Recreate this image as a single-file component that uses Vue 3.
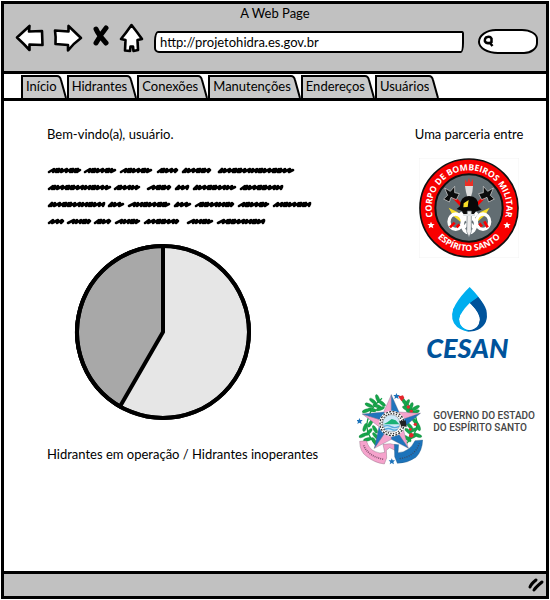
<script setup>
import { ref } from 'vue'

const address = ref('http://projetohidra.es.gov.br')
const query = ref('')
const tabs = ['Início', 'Hidrantes', 'Conexões', 'Manutenções', 'Endereços', 'Usuários']

// Placeholder copy: start and end of every scribbled word, line by line
const lines = [
  [[2, 33], [38, 68], [74, 104], [111, 130], [136, 163], [172, 246]],
  [[2, 63], [68, 92], [101, 123], [129, 141], [147, 188], [194, 235]],
  [[2, 57], [62, 76], [82, 122], [128, 143], [149, 186], [192, 221], [227, 263]],
  [[2, 16], [21, 43], [48, 63], [69, 92], [98, 131], [141, 165], [171, 217]]
]

const rises = [5, 3, 4, 3, 2, 3, 5, 4, 2, 3, 2, 4]
function scribble([from, to], row) {
  const base = 9 + row * 17
  let x = from
  let i = from + row
  let d = `M${x} ${base}`
  while (x < to - 4) {
    const step = rises[i % rises.length]
    const next = Math.min(x + step + 1, to)
    d += ` L${next} ${base - 3} L${next - 1} ${base}`
    x = next - 1
    i += 1
  }
  return d + ` L${to} ${base - 2}`
}
const scribbles = lines.flatMap((words, row) => words.map((w) => scribble(w, row)))

const operating = 7 / 12
const angle = operating * Math.PI * 2
const px = 89 + 86 * Math.sin(angle)
const py = 89 - 86 * Math.cos(angle)
const inactiveSlice = `M89 89 L${px} ${py} A86 86 0 0 1 89 3 Z`

// Leaves of the wreath: centre x, centre y, rotation
const leaves = [
  [92, 44, 70], [105, 58, 40], [78, 52, 40], [90, 66, 20], [66, 64, 25], [100, 74, -20],
  [76, 78, 10], [58, 80, -20], [70, 118, -60], [54, 130, -70], [84, 136, 60], [66, 144, -50],
  [48, 154, -25], [86, 156, 50], [62, 166, -15], [82, 172, 60],
  [180, 58, -60], [192, 68, -70], [206, 72, -30], [178, 74, 30], [205, 84, -20], [190, 84, 20],
  [204, 112, 50], [188, 126, 50], [214, 128, 70], [200, 138, -20], [184, 142, 40], [212, 154, 20],
  [196, 158, -20], [182, 164, 40], [172, 54, 60]
]
</script>

<template>
  <div class="window">
    <header class="chrome">
      <div class="title">A Web Page</div>
      <div class="toolbar">
        <nav class="buttons" aria-label="Navegação">
          <button type="button" aria-label="Voltar">
            <svg width="29" height="28" viewBox="0 0 29 28"><path class="ico" d="M2 13.5 L14.5 2 L14 7.500 L27 7 L27.500 21 L14.500 20.500 L14.500 26 Q9 20 2 13.500Z" /></svg>
          </button>
          <button type="button" aria-label="Avançar">
            <svg width="30" height="28" viewBox="0 0 30 28"><path class="ico" d="M28 14 L15.500 2 L15.500 7.500 L2 6.500 Q3 13 2.500 20 L15 21 L15 26.500 Q21 19 28 14Z" /></svg>
          </button>
          <button type="button" class="stop" aria-label="Parar">
            <svg width="18" height="22" viewBox="0 0 18 22"><path class="cross" d="M4 4 Q6 9 14 18 M14 3 Q9 9 4 18" /></svg>
          </button>
          <button type="button" aria-label="Início">
            <svg width="25" height="30" viewBox="0 0 25 30"><path class="ico" d="M12.500 2 Q18 9 23 16 L18.500 17 L19 27 L14.500 28 L14 23.500 L11.500 23.500 L11 28 L6 27.500 L6.500 17 L2 16 Q7 10 12.500 2Z" /></svg>
          </button>
        </nav>
        <input v-model="address" class="address" type="text" aria-label="Endereço da página" />
        <label class="search">
          <svg width="12" height="13" viewBox="0 0 12 13"><path d="M3 2.500 Q7 .8 8.500 3.500 L8.500 7 Q4 9.500 2 6.500 Q1.500 4 3 2.500Z M7 8 L9.500 11" /></svg>
          <input v-model="query" type="search" aria-label="Pesquisar" />
        </label>
      </div>
    </header>

    <nav class="tabs" aria-label="Seções">
      <a v-for="tab in tabs" :key="tab" class="tab" href="#">
        <span>{{ tab }}</span>
        <svg width="10" height="23" viewBox="0 0 10 23">
          <path d="M0 1 Q3 1 4 5 L9 23 L0 23Z" fill="#c9c9c9" />
          <path d="M0 1 Q3 1 4 5 L9 23" fill="none" stroke="#000" stroke-width="2" />
        </svg>
      </a>
    </nav>

    <main class="page">
      <section class="intro">
        <p>Bem-vindo(a), usuário.</p>
        <svg class="scribbles" width="266" height="64" viewBox="0 0 266 64" aria-hidden="true">
          <path v-for="(d, i) in scribbles" :key="i" :d="d" />
        </svg>
        <svg class="pie" width="178" height="178" viewBox="0 0 178 178" role="img">
          <circle cx="89" cy="89" r="86" fill="#e6e6e6" />
          <path :d="inactiveSlice" fill="#a8a8a8" />
          <circle cx="89" cy="89" r="86" fill="none" />
        </svg>
        <p>Hidrantes em operação / Hidrantes inoperantes</p>
      </section>

      <aside class="partners">
        <p>Uma parceria entre</p>

        <svg class="badge" width="100" height="100" viewBox="57 113 300 300" role="img">
          <defs>
            <path id="arc-top" d="M104 306 A112 112 0 1 1 310 306" />
            <path id="arc-bottom" d="M78 263 A129 129 0 0 0 336 263" />
          </defs>
          <rect x="57" y="113" width="300" height="300" fill="#fff" stroke="#eee" stroke-width="2" />
          <circle cx="207" cy="263" r="147" fill="#f80000" stroke="#111" stroke-width="5" />
          <circle cx="207" cy="263" r="101" fill="#626d72" stroke="#111" stroke-width="6" />
          <g class="badge-text">
            <text><textPath href="#arc-top" startOffset="50%" text-anchor="middle">CORPO DE BOMBEIROS MILITAR</textPath></text>
            <text><textPath href="#arc-bottom" startOffset="50%" text-anchor="middle">ESPÍRITO SANTO</textPath></text>
          </g>
          <path fill="#fff" d="M93 304 l3 7 8 0 -6 5 2 8 -7 -4 -7 4 2 -8 -6 -5 8 0Z M321 304 l3 7 8 0 -6 5 2 8 -7 -4 -7 4 2 -8 -6 -5 8 0Z" />
          <path d="M158 228 L184 255 M255 228 L229 255" stroke="#f80000" stroke-width="9" />
          <g fill="#0b0b0b" stroke="#ddd" stroke-width="2">
            <path d="M134 203 L151 213 L164 198 L164 217 L178 220 L169 238 L153 231 L148 245 L131 236 L143 225Z" />
            <path d="M280 203 L263 213 L250 198 L250 217 L236 220 L245 238 L261 231 L266 245 L283 236 L271 225Z" />
          </g>
          <path fill="#ee2e24" d="M195 199 L195 177 L201 187 L207 173 L212 187 L219 175 L219 199Z" />
          <path fill="#ddd" d="M195 197 H219 L217 215 L213 229 H202 L198 215Z" />
          <path fill="#080808" d="M180 258 Q180 228 207 227 Q236 228 235 258 L245 268 L222 275 L193 275 L170 266Z" />
          <path fill="#f9df27" d="M146 262 L172 275 L189 295 L181 304 L159 286Z M269 262 L242 275 L225 296 L232 304 L255 285Z M191 249 L206 239 L203 260 L190 261Z" />
          <path fill="#0b0b0b" d="M187 271 L227 271 L222 292 L192 292Z" />
          <g fill="none" stroke="#fff" stroke-width="10">
            <ellipse cx="167" cy="304" rx="20" ry="23" />
            <ellipse cx="207" cy="313" rx="20" ry="24" />
            <ellipse cx="249" cy="304" rx="20" ry="23" />
            <path d="M180 277 L226 326 M232 277 L188 326" />
          </g>
          <path d="M164 307 L150 321 M178 312 L170 321 M238 309 L246 319 M253 303 L263 321" stroke="#f80000" stroke-width="8" />
          <path fill="#eee" stroke="#68747a" stroke-width="2" d="M202 272 L214 272 L214 334 L207 351 L200 334Z" />
          <path d="M190 284 H225" stroke="#dce0e2" stroke-width="6" />
        </svg>

        <svg class="cesan" width="87" height="82" viewBox="45 33 261 246" role="img">
          <path fill="#00aeef" d="M176 36 Q205 65 216 87 L198 68 L148 119 Q140 146 158 158 Q165 164 175 165 L175 170 Q143 167 129 145 Q115 119 134 88 Q149 62 176 36Z" />
          <path fill="#00539b" d="M201 65 Q221 88 226 105 Q235 148 201 164 Q185 172 164 168 Q195 165 203 145 Q211 126 193 103 L176 84 L178 82Z" />
          <path fill="#00aeef" d="M176 84 L149 118 L132 135 L126 103 L176 54 L200 67Z" />
          <path fill="#fff" d="M176 84 Q204 113 206 133 Q205 162 176 165 Q147 163 145 133 Q147 113 176 84Z" />
          <text x="46" y="248" class="cesan-text">CESAN</text>
        </svg>

        <div class="government">
          <svg width="66" height="72" viewBox="30 27 198 216" role="img">
            <g fill="none" stroke="#16a34a" stroke-width="4">
              <path d="M86 181 Q48 141 65 99 Q74 69 105 43" />
              <path d="M179 178 Q224 135 203 92 Q190 65 164 43" />
            </g>
            <g fill="#15a64a" stroke="#167c3c" stroke-width="1">
              <ellipse
                v-for="([x, y, turn], i) in leaves"
                :key="i"
                :cx="x"
                :cy="y"
                rx="13"
                ry="5"
                :transform="`rotate(${turn} ${x} ${y})`"
              />
            </g>
            <g fill="#e5262c">
              <path d="M152 34 L160 36 L168 34 L172 42 L164 52 L158 44Z" />
              <circle cx="184" cy="69" r="5" /><circle cx="193" cy="82" r="5" />
              <circle cx="193" cy="154" r="7" /><circle cx="205" cy="121" r="5" /><circle cx="190" cy="136" r="4" />
            </g>
            <g stroke="#656078" stroke-width="1">
              <path fill="#f5a3cc" d="M133 32 L110 84 L133 118Z M46 90 L96 128 L133 118Z M82 193 L133 166 L133 118Z M184 193 L168 132 L133 118Z M220 88 L156 84 L133 118Z" />
              <path fill="#1f74bd" d="M133 32 L156 84 L133 118Z M46 90 L110 84 L133 118Z M82 193 L96 128 L133 118Z M184 193 L133 166 L133 118Z M220 88 L168 132 L133 118Z" />
            </g>
            <circle cx="135" cy="119" r="39" fill="#fff" />
            <circle cx="135" cy="119" r="36" fill="none" stroke="#333" stroke-width="4" stroke-dasharray="6 4" />
            <circle cx="135" cy="119" r="30" fill="none" stroke="#333" stroke-width="4" stroke-dasharray="4 4" />
            <circle cx="133" cy="118" r="26" fill="#cfe9f8" stroke="#333" stroke-width="1" />
            <path fill="#1bb176" d="M109 121 L121 115 L134 105 L146 109 L157 121Z" />
            <path d="M110 127 Q122 122 132 128 T156 127 M114 136 Q124 131 134 136 T151 136" fill="none" stroke="#58a9dc" stroke-width="4" />
            <path fill="#222" d="M157 112 L176 109 L179 128 L162 126Z" />
            <path fill="#f5a3cc" stroke="#6c5365" stroke-width="1" d="M38 172 L58 170 Q66 196 85 203 Q98 210 113 205 L108 181 L130 179 L150 184 L144 199 L128 191 L118 199 L119 222 L112 240 Q82 236 60 218 Q38 204 38 172Z" />
            <path fill="#1c73ba" stroke="#25547b" stroke-width="1" d="M142 181 L155 182 L153 206 Q188 204 204 170 L227 168 Q226 200 207 220 Q182 238 151 238 L143 218Z" />
            <path d="M50 184 Q62 216 110 226" fill="none" stroke="#895572" stroke-width="5" stroke-dasharray="3 3" />
            <path d="M158 224 Q204 218 217 178" fill="none" stroke="#3a4a66" stroke-width="4" stroke-dasharray="3 4" />
            <path fill="#1c73ba" d="M148 27 l3 6 7 0 -5 5 2 7 -7 -4 -6 4 2 -7 -5 -5 7 0Z M37 102 l3 6 7 0 -5 5 2 7 -7 -4 -6 4 2 -7 -5 -5 7 0Z M134 223 l3 6 7 0 -5 5 2 7 -7 -4 -6 4 2 -7 -5 -5 7 0Z" />
          </svg>
          <div class="government-name">GOVERNO DO ESTADO<br />DO ESPÍRITO SANTO</div>
        </div>
      </aside>
    </main>

    <footer class="status">
      <svg width="18" height="16" viewBox="0 0 18 16" aria-hidden="true"><path d="M2 10 Q3 7 8 3 M6 13 Q8 10 14 5" /></svg>
    </footer>
  </div>
</template>

<style>
body {
  margin: 0;
  background: #fff;
}
</style>

<style scoped>
* {
  box-sizing: border-box;
}
.window {
  display: flex;
  flex-direction: column;
  min-height: 100vh;
  padding: 1px;
  font-family: Lato, "Liberation Sans", sans-serif;
  font-size: 13px;
  line-height: 18px;
  color: #000;
}
.chrome {
  border: 3px solid #000;
  background: #c1c1c1;
  height: 73px;
}
.title {
  text-align: center;
}
.toolbar {
  display: flex;
  align-items: center;
  height: 32px;
  padding: 0 8px 0 11px;
}
.buttons {
  display: flex;
  align-items: center;
  gap: 9px;
}
button {
  display: flex;
  padding: 0;
  border: 0;
  background: none;
}
.stop {
  padding-bottom: 4px;
}
.ico {
  fill: #fff;
  stroke: #000;
  stroke-width: 2.6;
  stroke-linejoin: round;
}
.cross {
  fill: none;
  stroke: #000;
  stroke-width: 5;
  stroke-linecap: round;
}
.address {
  flex: 1;
  min-width: 0;
  height: 22px;
  margin: 8px 14px 0 10px;
  padding: 0 4px;
  border: 2px solid #000;
  border-radius: 4px 2px 3px 5px / 10px 3px 10px 5px;
  background: #fff;
  font: inherit;
  color: inherit;
}
.search {
  display: flex;
  align-items: center;
  width: 60px;
  height: 25px;
  margin-top: 6px;
  padding-left: 3px;
  border: 2px solid #000;
  border-radius: 18px 16px 14px 20px / 13px 10px 11px 12px;
  background: #fff;
}
.search svg {
  flex: none;
  fill: none;
  stroke: #000;
  stroke-width: 2.5;
}
.search input {
  width: 100%;
  min-width: 0;
  padding: 0;
  border: 0;
  background: none;
  font: inherit;
  outline: 0;
}
.tabs {
  display: flex;
  align-items: flex-end;
  height: 27px;
  padding-left: 17px;
  border: solid #000;
  border-width: 0 3px 3px;
}
.tab {
  display: flex;
  height: 23px;
  color: inherit;
  text-decoration: none;
}
.tab span {
  padding: 0 0 0 3px;
  border: solid #000;
  border-width: 2px 0 0 2px;
  background: #c9c9c9;
}
.page {
  flex: 1;
  display: flex;
  justify-content: space-between;
  padding: 24px 11px 24px 43px;
  border: solid #000;
  border-width: 0 3px;
}
p {
  margin: 0;
}
.intro {
  display: flex;
  flex-direction: column;
  align-items: flex-start;
}
.scribbles {
  margin-top: 20px;
  fill: none;
  stroke: #000;
  stroke-width: 2.6;
  stroke-linejoin: round;
  stroke-linecap: round;
}
.pie {
  margin: 16px 0 24px 27px;
  stroke: #000;
  stroke-width: 4;
}
.partners {
  display: flex;
  flex-direction: column;
  align-items: center;
  padding-left: 46px;
}
.badge {
  margin-top: 15px;
}
.badge-text {
  fill: #fff;
  font-family: "Open Sans", sans-serif;
  font-size: 26px;
  font-weight: 700;
}
.cesan {
  margin-top: 28px;
  overflow: visible;
}
.cesan-text {
  fill: #00539b;
  font-family: Lato, sans-serif;
  font-size: 81px;
  font-style: italic;
  font-weight: 900;
}
.government {
  display: flex;
  gap: 10px;
  margin: 25px 0 0 -46px;
}
.government-name {
  padding-top: 17px;
  font-family: Roboto, sans-serif;
  font-size: 10px;
  font-weight: 500;
  line-height: 12px;
  color: #444;
  white-space: nowrap;
}
.status {
  display: flex;
  justify-content: flex-end;
  align-items: center;
  height: 28px;
  border: 3px solid #000;
  background: #c1c1c1;
}
.status path {
  fill: none;
  stroke: #000;
  stroke-width: 3;
  stroke-linecap: round;
}
</style>
